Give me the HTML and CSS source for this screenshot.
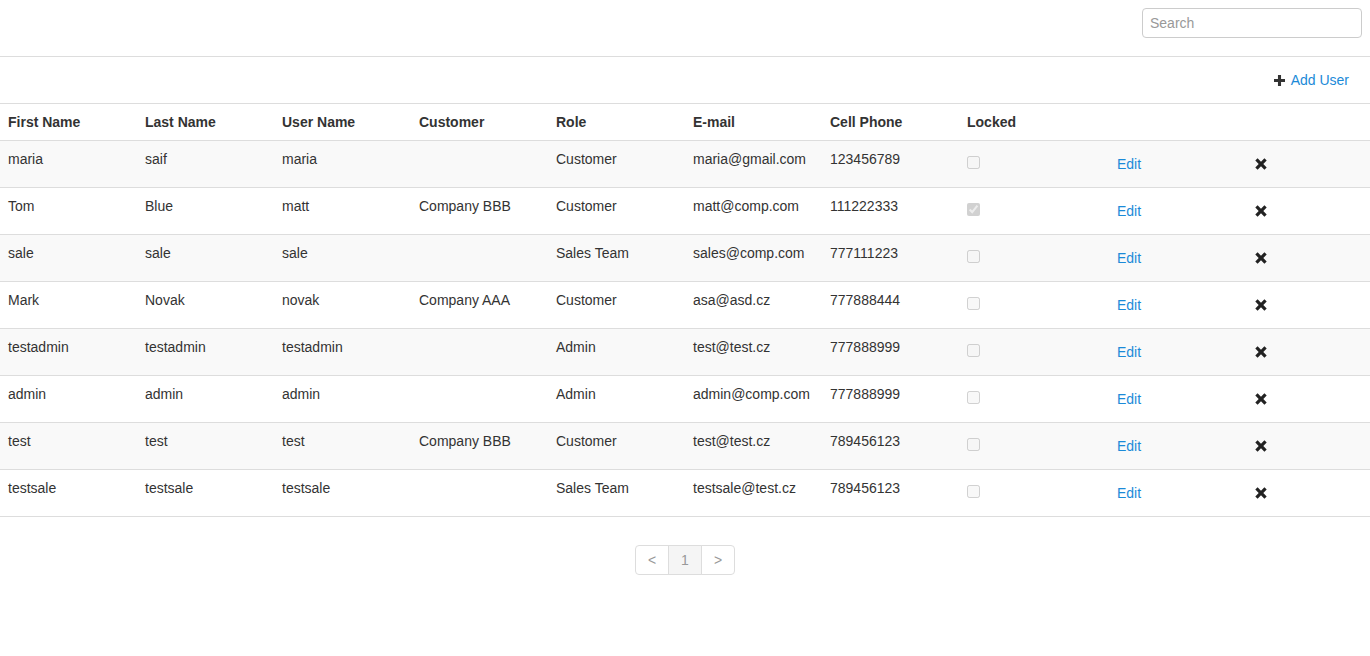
FILE: index.html
```html
<!DOCTYPE html>
<html>
<head>
<meta charset="utf-8">
<link rel="stylesheet" href="styles.css">
</head>
<body>
<header class="topbar">
  <input class="search" type="text" placeholder="Search">
</header>
<div class="toolbar">
  <a class="add-user" href="#"><svg class="plus" viewBox="0 0 10 10" width="11" height="11"><path d="M3.6 0h2.8v3.6H10v2.8H6.4V10H3.6V6.4H0V3.6h3.6z" fill="#333"/></svg>Add User</a>
</div>
<table class="users">
  <thead>
    <tr>
      <th>First Name</th><th>Last Name</th><th>User Name</th><th>Customer</th><th>Role</th><th>E-mail</th><th>Cell Phone</th><th>Locked</th><th></th><th></th>
    </tr>
  </thead>
  <tbody>
    <tr><td>maria</td><td>saif</td><td>maria</td><td></td><td>Customer</td><td>maria@gmail.com</td><td>123456789</td><td><input class="chk" type="checkbox" disabled></td><td><a class="btn-link" href="#">Edit</a></td><td><a class="btn-del" href="#"><svg viewBox="0 0 12 12"><path d="M2.6 0.3L6 3.7 9.4 0.3 11.7 2.6 8.3 6 11.7 9.4 9.4 11.7 6 8.3 2.6 11.7 0.3 9.4 3.7 6 0.3 2.6z" fill="#222"/></svg></a></td></tr>
    <tr><td>Tom</td><td>Blue</td><td>matt</td><td>Company BBB</td><td>Customer</td><td>matt@comp.com</td><td>111222333</td><td><input class="chk" type="checkbox" checked disabled></td><td><a class="btn-link" href="#">Edit</a></td><td><a class="btn-del" href="#"><svg viewBox="0 0 12 12"><path d="M2.6 0.3L6 3.7 9.4 0.3 11.7 2.6 8.3 6 11.7 9.4 9.4 11.7 6 8.3 2.6 11.7 0.3 9.4 3.7 6 0.3 2.6z" fill="#222"/></svg></a></td></tr>
    <tr><td>sale</td><td>sale</td><td>sale</td><td></td><td>Sales Team</td><td>sales@comp.com</td><td>777111223</td><td><input class="chk" type="checkbox" disabled></td><td><a class="btn-link" href="#">Edit</a></td><td><a class="btn-del" href="#"><svg viewBox="0 0 12 12"><path d="M2.6 0.3L6 3.7 9.4 0.3 11.7 2.6 8.3 6 11.7 9.4 9.4 11.7 6 8.3 2.6 11.7 0.3 9.4 3.7 6 0.3 2.6z" fill="#222"/></svg></a></td></tr>
    <tr><td>Mark</td><td>Novak</td><td>novak</td><td>Company AAA</td><td>Customer</td><td>asa@asd.cz</td><td>777888444</td><td><input class="chk" type="checkbox" disabled></td><td><a class="btn-link" href="#">Edit</a></td><td><a class="btn-del" href="#"><svg viewBox="0 0 12 12"><path d="M2.6 0.3L6 3.7 9.4 0.3 11.7 2.6 8.3 6 11.7 9.4 9.4 11.7 6 8.3 2.6 11.7 0.3 9.4 3.7 6 0.3 2.6z" fill="#222"/></svg></a></td></tr>
    <tr><td>testadmin</td><td>testadmin</td><td>testadmin</td><td></td><td>Admin</td><td>test@test.cz</td><td>777888999</td><td><input class="chk" type="checkbox" disabled></td><td><a class="btn-link" href="#">Edit</a></td><td><a class="btn-del" href="#"><svg viewBox="0 0 12 12"><path d="M2.6 0.3L6 3.7 9.4 0.3 11.7 2.6 8.3 6 11.7 9.4 9.4 11.7 6 8.3 2.6 11.7 0.3 9.4 3.7 6 0.3 2.6z" fill="#222"/></svg></a></td></tr>
    <tr><td>admin</td><td>admin</td><td>admin</td><td></td><td>Admin</td><td>admin@comp.com</td><td>777888999</td><td><input class="chk" type="checkbox" disabled></td><td><a class="btn-link" href="#">Edit</a></td><td><a class="btn-del" href="#"><svg viewBox="0 0 12 12"><path d="M2.6 0.3L6 3.7 9.4 0.3 11.7 2.6 8.3 6 11.7 9.4 9.4 11.7 6 8.3 2.6 11.7 0.3 9.4 3.7 6 0.3 2.6z" fill="#222"/></svg></a></td></tr>
    <tr><td>test</td><td>test</td><td>test</td><td>Company BBB</td><td>Customer</td><td>test@test.cz</td><td>789456123</td><td><input class="chk" type="checkbox" disabled></td><td><a class="btn-link" href="#">Edit</a></td><td><a class="btn-del" href="#"><svg viewBox="0 0 12 12"><path d="M2.6 0.3L6 3.7 9.4 0.3 11.7 2.6 8.3 6 11.7 9.4 9.4 11.7 6 8.3 2.6 11.7 0.3 9.4 3.7 6 0.3 2.6z" fill="#222"/></svg></a></td></tr>
    <tr><td>testsale</td><td>testsale</td><td>testsale</td><td></td><td>Sales Team</td><td>testsale@test.cz</td><td>789456123</td><td><input class="chk" type="checkbox" disabled></td><td><a class="btn-link" href="#">Edit</a></td><td><a class="btn-del" href="#"><svg viewBox="0 0 12 12"><path d="M2.6 0.3L6 3.7 9.4 0.3 11.7 2.6 8.3 6 11.7 9.4 9.4 11.7 6 8.3 2.6 11.7 0.3 9.4 3.7 6 0.3 2.6z" fill="#222"/></svg></a></td></tr>
  </tbody>
</table>
<nav class="pager">
  <ul class="pagination">
    <li><a href="#">&lt;</a></li>
    <li class="active"><a href="#">1</a></li>
    <li><a href="#">&gt;</a></li>
  </ul>
</nav>
</body>
</html>
```

FILE: styles.css
```css
* { box-sizing: border-box; }
html, body { margin: 0; padding: 0; background: #fff; }
body {
  font-family: "Liberation Sans", Arial, sans-serif;
  font-size: 14px;
  line-height: 20px;
  color: #333;
}
a { text-decoration: none; }

.topbar {
  display: flex;
  justify-content: flex-end;
  padding: 8px 8px 0 0;
  height: 57px;
  border-bottom: 1px solid #ddd;
}
.search {
  width: 220px;
  height: 30px;
  padding: 5px 7px;
  font-family: inherit;
  font-size: 14px;
  color: #555;
  border: 1px solid #ccc;
  border-radius: 4px;
  outline: none;
}
.search::placeholder { color: #999; }

.toolbar {
  display: flex;
  justify-content: flex-end;
  align-items: center;
  height: 47px;
  padding-right: 21px;
  border-bottom: 1px solid #ddd;
}
.add-user {
  display: flex;
  align-items: center;
  gap: 6px;
  color: #1b8ad8;
}
.plus { display: block; }

.users {
  width: 100%;
  border-collapse: collapse;
  table-layout: fixed;
}
.users th, .users td {
  width: 137px;
  padding: 8px;
  text-align: left;
  vertical-align: top;
  white-space: nowrap;
}
.users th {
  font-weight: bold;
  border-bottom: 1px solid #ddd;
}
.users td { border-bottom: 1px solid #ddd; height: 47px; }
.users tbody tr:nth-child(odd) { background: #f9f9f9; }

.chk {
  display: block;
  margin: 7px 0 0 0;
  width: 13px;
  height: 13px;
}
.btn-link {
  display: inline-block;
  padding: 5px 12px 5px 13px;
  line-height: 20px;
  color: #1b8ad8;
}
.btn-del {
  display: inline-flex;
  align-items: center;
  height: 30px;
  padding: 0 12px 0 14px;
}
.btn-del svg { display: block; width: 12px; height: 12px; }

.pager {
  display: flex;
  justify-content: center;
  padding-top: 28px;
}
.pagination {
  display: flex;
  list-style: none;
  margin: 0;
  padding: 0;
}
.pagination li a {
  display: block;
  width: 34px;
  height: 30px;
  line-height: 28px;
  text-align: center;
  color: #999;
  font-size: 14px;
  border: 1px solid #ddd;
  margin-left: -1px;
  background: #fff;
}
.pagination li:first-child a { border-radius: 4px 0 0 4px; margin-left: 0; }
.pagination li:last-child a { border-radius: 0 4px 4px 0; }
.pagination li.active a { background: #f5f5f5; color: #999; }
```
